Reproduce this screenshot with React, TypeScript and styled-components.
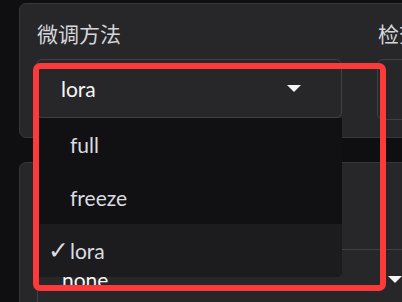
import React from 'react'
import styled, { createGlobalStyle } from 'styled-components'

const GlobalStyle = createGlobalStyle`
  html, body {
    margin: 0;
    padding: 0;
    background: #0f0f11;
    overflow: hidden;
  }
  body {
    font-family: "Lato", "Noto Sans CJK SC", sans-serif;
  }
`

const Page = styled.div`
  position: relative;
  width: 900px;
  height: 302px;
  padding: 3px 0 0 19px;
  display: flex;
  flex-direction: column;
  gap: 24px;
`

const Panel = styled.div<{ $padLeft?: number }>`
  background: #27272a;
  border: 1px solid #36363b;
  border-radius: 7px;
  padding: 16px 16px 17px ${(p) => p.$padLeft ?? 16}px;
`

const Row = styled.div`
  display: flex;
  gap: 35px;
`

const Field = styled.div<{ $width: number }>`
  width: ${(p) => p.$width}px;
  display: flex;
  flex-direction: column;
  flex-shrink: 0;
`

const Label = styled.div`
  font-size: 21px;
  line-height: 28px;
  color: #d6d6da;
  margin-bottom: 11px;
  padding-left: 1px;
  white-space: nowrap;
`

const AccordionHead = styled.div`
  font-size: 21px;
  line-height: 28px;
  color: #d6d6da;
  margin-bottom: 3px;
`

const SelectBox = styled.div<{ $height: number }>`
  position: relative;
  height: ${(p) => p.$height}px;
  box-sizing: border-box;
  border: 1px solid #3f3f46;
  border-radius: 6px;
  background: #27272a;
  display: flex;
  align-items: center;
  padding: 0 40px 0 24px;
`

const Value = styled.span`
  flex: 1;
  font-size: 21px;
  color: #f6f6f7;
`

const Arrow = styled.svg`
  width: 14px;
  height: 7px;
  flex-shrink: 0;
`

const Menu = styled.ul`
  position: absolute;
  top: calc(100% + 1px);
  left: -1px;
  right: -1px;
  margin: 0;
  padding: 0;
  list-style: none;
  background: #111113;
  border-radius: 0 0 6px 6px;
  overflow: hidden;
  z-index: 5;
`

const Option = styled.li<{ $selected?: boolean }>`
  height: 53px;
  display: flex;
  align-items: center;
  padding-left: 12px;
  font-size: 21px;
  color: #dcdce0;
  background: ${(p) => (p.$selected ? '#1c1c1f' : 'transparent')};
`

const Check = styled.span<{ $show?: boolean }>`
  width: 22px;
  font-family: "DejaVu Sans", sans-serif;
  font-size: 25px;
  line-height: 1;
  visibility: ${(p) => (p.$show ? 'visible' : 'hidden')};
`

const Highlight = styled.div`
  position: absolute;
  left: 33px;
  top: 63px;
  width: 353px;
  height: 228px;
  box-sizing: border-box;
  border: 6px solid #fc3a3a;
  border-radius: 7px;
  pointer-events: none;
  z-index: 10;
`

const DownArrow = () => (
  <Arrow viewBox="0 0 14 7">
    <path d="M0 0 L14 0 L7 7 Z" fill="#f4f4f5" />
  </Arrow>
)

const options = ['full', 'freeze', 'lora']

export default function App() {
  const selected = 'lora'
  return (
    <>
      <GlobalStyle />
      <Page>
        <Panel>
          <Row>
            <Field $width={306}>
              <Label>微调方法</Label>
              <SelectBox $height={59}>
                <Value>{selected}</Value>
                <DownArrow />
                <Menu>
                  {options.map((o) => (
                    <Option key={o} $selected={o === selected}>
                      <Check $show={o === selected}>✓</Check>
                      {o}
                    </Option>
                  ))}
                </Menu>
              </SelectBox>
            </Field>
            <Field $width={306}>
              <Label>检查点路径</Label>
              <SelectBox $height={61}>
                <Value />
                <DownArrow />
              </SelectBox>
            </Field>
          </Row>
        </Panel>
        <Panel $padLeft={17}>
          <AccordionHead>高级设置</AccordionHead>
          <Row>
            <Field $width={406}>
              <Label>量化等级</Label>
              <SelectBox $height={60}>
                <Value>none</Value>
                <DownArrow />
              </SelectBox>
            </Field>
          </Row>
        </Panel>
        <Highlight />
      </Page>
    </>
  )
}
